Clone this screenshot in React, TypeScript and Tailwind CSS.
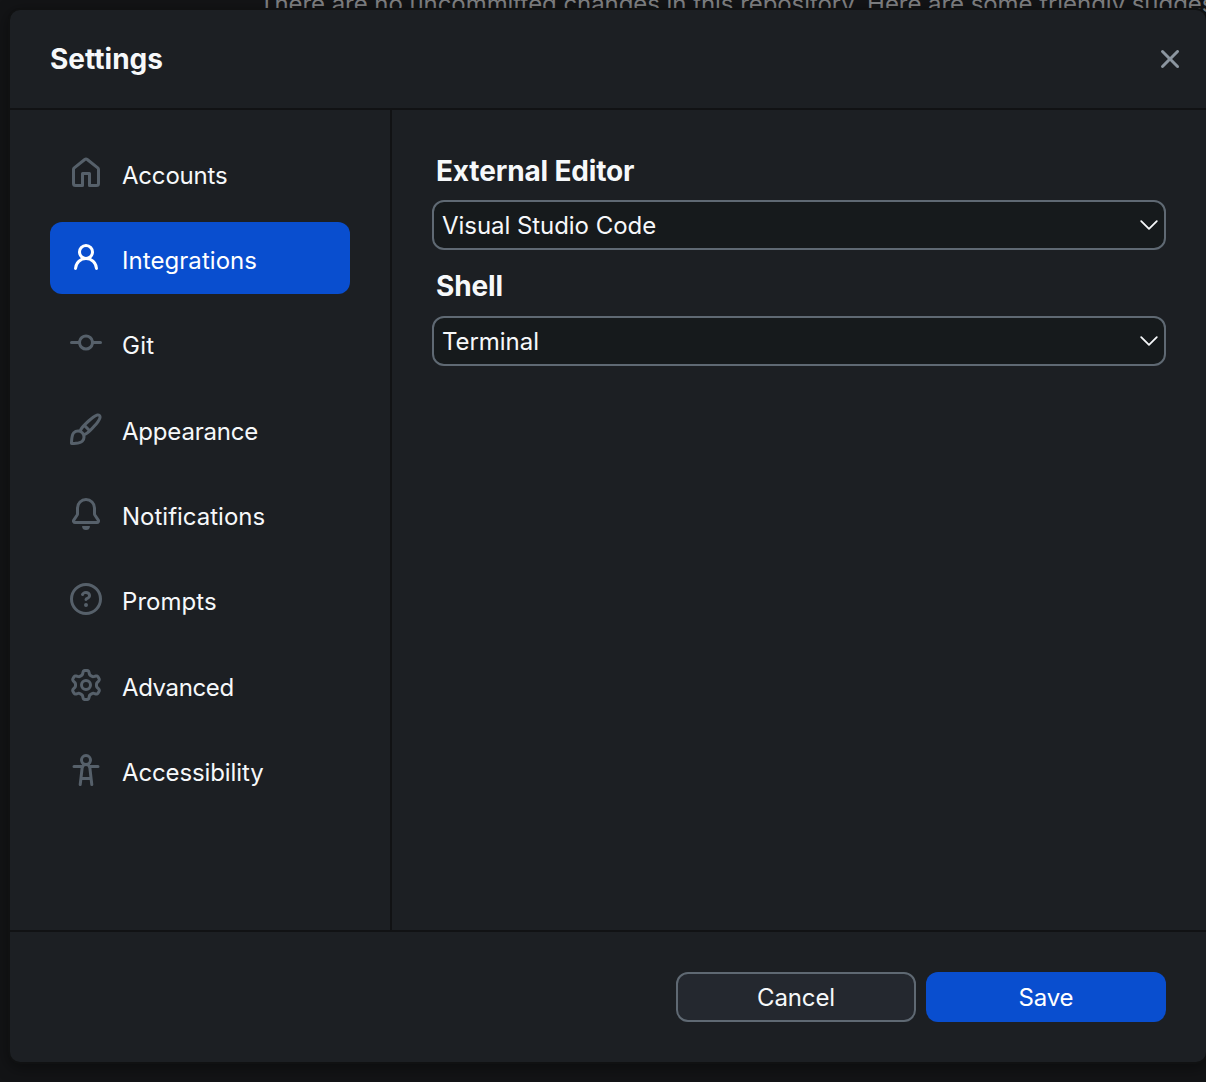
import type { ReactNode } from "react";

const paths = {
  home: "M6.906.664a1.749 1.749 0 0 1 2.187 0l5.25 4.2c.415.332.657.835.657 1.367v7.019A1.75 1.75 0 0 1 13.25 15h-3.5a.75.75 0 0 1-.75-.75V9H7v5.25a.75.75 0 0 1-.75.75h-3.5A1.75 1.75 0 0 1 1 13.25V6.23c0-.531.242-1.034.657-1.366l5.25-4.2Zm1.25 1.171a.25.25 0 0 0-.312 0l-5.25 4.2a.25.25 0 0 0-.094.196v7.019c0 .138.112.25.25.25H5.5V8.25a.75.75 0 0 1 .75-.75h3.5a.75.75 0 0 1 .75.75v5.25h2.75a.25.25 0 0 0 .25-.25V6.23a.25.25 0 0 0-.094-.195Z",
  person: "M10.561 8.073a6.005 6.005 0 0 1 3.432 5.142.75.75 0 1 1-1.498.07 4.5 4.5 0 0 0-8.99 0 .75.75 0 0 1-1.498-.07 6.004 6.004 0 0 1 3.431-5.142 3.999 3.999 0 1 1 5.123 0ZM10.5 5a2.5 2.5 0 1 0-5 0 2.5 2.5 0 0 0 5 0Z",
  commit: "M11.93 8.5a4.002 4.002 0 0 1-7.86 0H.75a.75.75 0 0 1 0-1.5h3.32a4.002 4.002 0 0 1 7.86 0h3.32a.75.75 0 0 1 0 1.5Zm-1.43-.75a2.5 2.5 0 1 0-5 0 2.5 2.5 0 0 0 5 0Z",
  brush: "M11.134 1.535c.7-.509 1.416-.942 2.076-1.155.649-.21 1.463-.267 2.069.34.603.601.568 1.411.368 2.07-.202.668-.624 1.39-1.125 2.096-1.011 1.424-2.496 2.987-3.775 4.249-1.098 1.084-2.132 1.839-3.04 2.3a3.744 3.744 0 0 1-1.055 3.217c-.431.431-1.065.691-1.657.861-.614.177-1.294.287-1.914.357A21.151 21.151 0 0 1 .797 16H.743l.007-.75H.749L.742 16a.75.75 0 0 1-.743-.742l.743-.008-.742.007v-.054a21.25 21.25 0 0 1 .13-2.284c.067-.647.187-1.287.358-1.914.17-.591.43-1.226.86-1.657a3.746 3.746 0 0 1 3.227-1.054c.466-.893 1.225-1.907 2.314-2.982 1.271-1.255 2.833-2.75 4.245-3.777ZM1.62 13.089c-.051.464-.086.929-.104 1.395.466-.018.932-.053 1.396-.104a10.511 10.511 0 0 0 1.668-.309c.526-.151.856-.325 1.011-.48a2.25 2.25 0 1 0-3.182-3.182c-.155.155-.329.485-.48 1.01a10.515 10.515 0 0 0-.309 1.67Zm10.396-10.34c-1.224.89-2.605 2.189-3.822 3.384l1.718 1.718c1.21-1.205 2.51-2.597 3.387-3.833.47-.662.78-1.227.912-1.662.134-.444.032-.551.009-.575h-.001V1.78c-.014-.014-.113-.113-.548.027-.432.14-.995.462-1.655.942Zm-4.832 7.266-.001.001a9.859 9.859 0 0 0 1.63-1.142L7.155 7.216a9.7 9.7 0 0 0-1.161 1.607c.482.302.889.71 1.19 1.192Z",
  bell: "M8 16a2 2 0 0 0 1.985-1.75c.017-.137-.097-.25-.235-.25h-3.5c-.138 0-.252.113-.235.25A2 2 0 0 0 8 16ZM3 5a5 5 0 0 1 10 0v2.947c0 .05.015.098.042.139l1.703 2.555A1.519 1.519 0 0 1 13.482 13H2.518a1.516 1.516 0 0 1-1.263-2.36l1.703-2.554A.255.255 0 0 0 3 7.947Zm5-3.5A3.5 3.5 0 0 0 4.5 5v2.947c0 .346-.102.683-.294.97l-1.703 2.556a.017.017 0 0 0-.003.01l.001.006c0 .002.002.004.004.006l.006.004.007.001h10.964l.007-.001.006-.004.004-.006.001-.007a.017.017 0 0 0-.003-.01l-1.703-2.554a1.745 1.745 0 0 1-.294-.97V5A3.5 3.5 0 0 0 8 1.5Z",
  question: "M0 8a8 8 0 1 1 16 0A8 8 0 0 1 0 8Zm8-6.5a6.5 6.5 0 1 0 0 13 6.5 6.5 0 0 0 0-13ZM6.92 6.085h.001a.749.749 0 1 1-1.342-.67c.169-.339.436-.701.849-.977C6.845 4.16 7.369 4 8 4a2.756 2.756 0 0 1 1.637.525c.503.377.863.965.863 1.725 0 .448-.115.83-.329 1.15-.205.307-.47.513-.692.662-.109.072-.22.138-.313.195l-.006.004a6.24 6.24 0 0 0-.26.16.952.952 0 0 0-.276.245.75.75 0 0 1-1.248-.832c.184-.264.42-.489.692-.661.103-.067.207-.132.313-.195l.007-.004c.1-.061.182-.11.258-.161a.969.969 0 0 0 .277-.245C8.96 6.514 9 6.427 9 6.25a.612.612 0 0 0-.262-.525A1.27 1.27 0 0 0 8 5.5c-.369 0-.595.09-.74.187a1.01 1.01 0 0 0-.34.398ZM9 11a1 1 0 1 1-2 0 1 1 0 0 1 2 0Z",
  gear: "M8 0a8.2 8.2 0 0 1 .701.031C9.444.095 9.99.645 10.16 1.29l.288 1.107c.018.066.079.158.212.224.231.114.454.243.668.386.123.082.233.09.299.071l1.103-.303c.644-.176 1.392.021 1.82.63.27.385.506.792.704 1.218.315.675.111 1.422-.364 1.891l-.814.806c-.049.048-.098.147-.088.294.016.257.016.515 0 .772-.01.147.038.246.088.294l.814.806c.475.469.679 1.216.364 1.891a7.977 7.977 0 0 1-.704 1.217c-.428.61-1.176.807-1.82.63l-1.102-.302c-.067-.019-.177-.011-.3.071a5.909 5.909 0 0 1-.668.386c-.133.066-.194.158-.211.224l-.29 1.106c-.168.646-.715 1.196-1.458 1.26a8.006 8.006 0 0 1-1.402 0c-.743-.064-1.289-.614-1.458-1.26l-.289-1.106c-.018-.066-.079-.158-.212-.224a5.738 5.738 0 0 1-.668-.386c-.123-.082-.233-.09-.299-.071l-1.103.303c-.644.176-1.392-.021-1.82-.63a8.12 8.12 0 0 1-.704-1.218c-.315-.675-.111-1.422.363-1.891l.815-.806c.05-.048.098-.147.088-.294a6.214 6.214 0 0 1 0-.772c.01-.147-.038-.246-.088-.294l-.815-.806C.635 6.045.431 5.298.746 4.623a7.92 7.92 0 0 1 .704-1.217c.428-.61 1.176-.807 1.82-.63l1.102.302c.067.019.177.011.3-.071.214-.143.437-.272.668-.386.133-.066.194-.158.211-.224l.29-1.106C6.009.645 6.556.095 7.299.03 7.53.01 7.764 0 8 0Zm-.571 1.525c-.036.003-.108.036-.137.146l-.289 1.105c-.147.561-.549.967-.998 1.189-.173.086-.34.183-.5.29-.417.278-.97.423-1.529.27l-1.103-.303c-.109-.03-.175.016-.195.045-.22.312-.412.644-.573.99-.014.031-.021.11.059.19l.815.806c.411.406.562.957.53 1.456a4.709 4.709 0 0 0 0 .582c.032.499-.119 1.05-.53 1.456l-.815.806c-.081.08-.073.159-.059.19.162.346.353.677.573.989.02.03.085.076.195.046l1.102-.303c.56-.153 1.113-.008 1.53.27.161.107.328.204.501.29.447.222.85.629.997 1.189l.289 1.105c.029.109.101.143.137.146a6.6 6.6 0 0 0 1.142 0c.036-.003.108-.036.137-.146l.289-1.105c.147-.561.549-.967.998-1.189.173-.086.34-.183.5-.29.417-.278.97-.423 1.529-.27l1.103.303c.109.029.175-.016.195-.045.22-.313.411-.644.573-.99.014-.031.021-.11-.059-.19l-.815-.806c-.411-.406-.562-.957-.53-1.456a4.709 4.709 0 0 0 0-.582c-.032-.499.119-1.05.53-1.456l.815-.806c.081-.08.073-.159.059-.19a6.464 6.464 0 0 0-.573-.989c-.02-.03-.085-.076-.195-.046l-1.102.303c-.56.153-1.113.008-1.53-.27a4.44 4.44 0 0 0-.501-.29c-.447-.222-.85-.629-.997-1.189l-.289-1.105c-.029-.11-.101-.143-.137-.146a6.6 6.6 0 0 0-1.142 0ZM11 8a3 3 0 1 1-6 0 3 3 0 0 1 6 0ZM9.5 8a1.5 1.5 0 1 0-3.001.001A1.5 1.5 0 0 0 9.5 8Z",
  accessibility: "M9.923 5.302c.063.063.122.129.178.198H14A.75.75 0 0 1 14 7h-3.3l.578 5.163.362 2.997a.75.75 0 0 1-1.49.18L9.868 13H6.132l-.282 2.34a.75.75 0 0 1-1.49-.18l.362-2.997L5.3 7H2a.75.75 0 0 1 0-1.5h3.9a2.54 2.54 0 0 1 .176-.198 3 3 0 1 1 3.847 0ZM9.2 7.073h-.001a1.206 1.206 0 0 0-2.398 0L6.305 11.5h3.39ZM9.5 3a1.5 1.5 0 1 0-3.001.001A1.5 1.5 0 0 0 9.5 3Z",
  close: "M3.72 3.72a.75.75 0 0 1 1.06 0L8 6.94l3.22-3.22a.749.749 0 0 1 1.275.326.749.749 0 0 1-.215.734L9.06 8l3.22 3.22a.749.749 0 0 1-.326 1.275.749.749 0 0 1-.734-.215L8 9.06l-3.22 3.22a.751.751 0 0 1-1.042-.018.751.751 0 0 1-.018-1.042L6.94 8 3.72 4.78a.75.75 0 0 1 0-1.06Z",
};

function Icon({ name }: { name: keyof typeof paths }) {
  return (
    <svg viewBox="0 0 16 16" className="size-8 shrink-0 fill-current" aria-hidden="true">
      <path fillRule="evenodd" d={paths[name]} />
    </svg>
  );
}

const tabs: { icon: keyof typeof paths; label: string; tracking: string }[] = [
  { icon: "home", label: "Accounts", tracking: "tracking-[-0.2px]" },
  { icon: "person", label: "Integrations", tracking: "tracking-[0.06px]" },
  { icon: "commit", label: "Git", tracking: "tracking-[0.3px]" },
  { icon: "brush", label: "Appearance", tracking: "tracking-[-0.2px]" },
  { icon: "bell", label: "Notifications", tracking: "tracking-[0px]" },
  { icon: "question", label: "Prompts", tracking: "tracking-[0.05px]" },
  { icon: "gear", label: "Advanced", tracking: "tracking-[-0.38px]" },
  { icon: "accessibility", label: "Accessibility", tracking: "tracking-[-0.12px]" },
];

function Select({ children }: { children: ReactNode }) {
  return (
    <button className="flex h-[50px] w-full items-center justify-between rounded-xl border-2 border-[#5f6973] bg-[#161a1c] pr-1.5 pl-2 text-left text-2xl">
      <span className="pt-0.5 tracking-[-0.05px]">{children}</span>
      <svg viewBox="0 0 18 10" className="h-2.5 w-[18px]" fill="none" stroke="currentColor" strokeWidth="1.8" strokeLinecap="round" strokeLinejoin="round">
        <path d="M1.2 1.1 9 8.8l7.8-7.7" />
      </svg>
    </button>
  );
}

export default function App() {
  return (
    <div className="relative h-[1082px] w-[1206px] overflow-hidden bg-[#131416] font-['Inter',sans-serif] text-[#f6f8fa]">
      <p className="absolute top-[-12px] left-[259px] text-2xl leading-8 tracking-[-0.06px] whitespace-nowrap text-[#808183]">
        There are no uncommitted changes in this repository. Here are some friendly suggestions
      </p>
      <section className="relative mt-2 ml-2 flex h-[1056px] w-[1200px] flex-col rounded-xl border-2 border-[#101112] bg-[#1c1f23] shadow-[0_4px_16px_rgba(0,0,0,0.4)]">
        <header className="flex h-[100px] shrink-0 items-center justify-between border-b-2 border-[#111214] pr-5 pl-10">
          <h1 className="text-[28px] font-bold">Settings</h1>
          <button className="text-[#8b959f]" aria-label="Close">
            <Icon name="close" />
          </button>
        </header>
        <div className="flex grow">
          <nav className="flex w-[382px] shrink-0 flex-col gap-[13.33px] border-r-2 border-[#111214] pt-[26.67px] pr-10 pl-10">
            {tabs.map((tab) => {
              const active = tab.label === "Integrations";
              return (
                <button
                  key={tab.label}
                  className={`flex h-[72px] shrink-0 items-center gap-5 rounded-xl px-5 text-left text-2xl ${active ? "bg-[#094ecf] text-white" : ""}`}
                >
                  <span className={active ? "text-white" : "text-[#56606a]"}>
                    <Icon name={tab.icon} />
                  </span>
                  <span className={`pt-1.5 ${tab.tracking}`}>{tab.label}</span>
                </button>
              );
            })}
          </nav>
          <div className="grow pt-10 pr-10 pl-10">
            <h2 className="pl-1 text-[28px] leading-[42px] font-bold tracking-[-0.15px]">External Editor</h2>
            <div className="pt-2">
              <Select>Visual Studio Code</Select>
            </div>
            <h2 className="mt-[15px] pl-1 text-[28px] leading-[42px] font-bold tracking-[-0.15px]">Shell</h2>
            <div className="pt-[9px]">
              <Select>Terminal</Select>
            </div>
          </div>
        </div>
        <footer className="flex h-[132px] shrink-0 justify-end gap-2.5 border-t-2 border-[#111214] pt-10 pr-10 text-2xl tracking-[-0.15px]">
          <button className="h-[50px] w-60 rounded-xl border-2 border-[#5f6973] bg-[#24282f] pt-0.5">Cancel</button>
          <button className="h-[50px] w-60 rounded-xl bg-[#094ecf] pt-0.5 text-white">Save</button>
        </footer>
      </section>
    </div>
  );
}
